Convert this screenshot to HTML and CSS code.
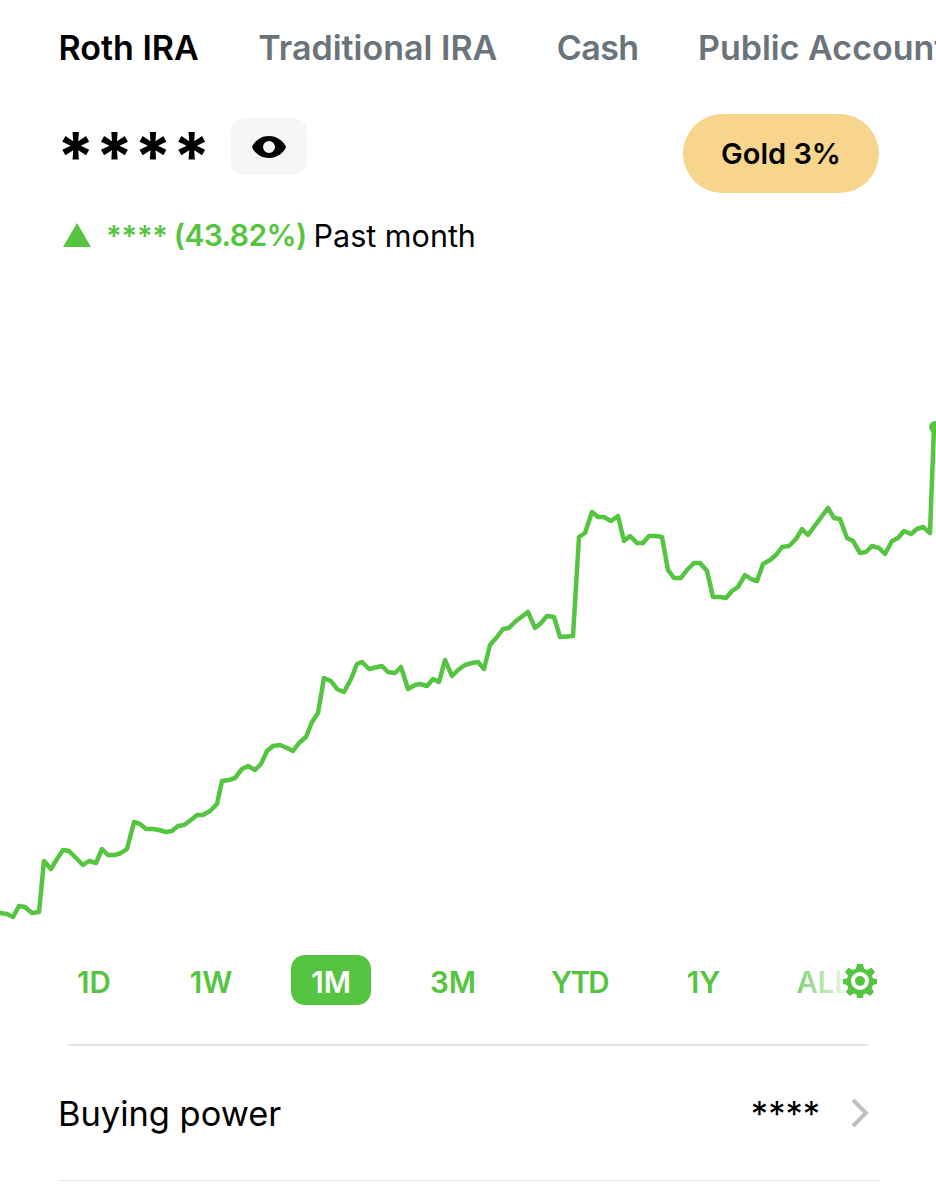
FILE: index.html
```html
<!DOCTYPE html>
<html lang="en">
<head>
<meta charset="utf-8">
<title>Account</title>
<link rel="stylesheet" href="styles.css">
</head>
<body>
<main class="page">
  <nav class="tabs">
    <span class="tab active">Roth IRA</span>
    <span class="tab">Traditional IRA</span>
    <span class="tab cash">Cash</span>
    <span class="tab">Public Account</span>
  </nav>
  <section class="summary">
    <div class="balance-row">
      <span class="balance">****</span>
      <span class="eye-btn">
        <svg class="eye" viewBox="0 0 34 22"><path fill-rule="evenodd" d="M17 0C26 0 32 6 34 11C32 16 26 22 17 22C8 22 2 16 0 11C2 6 8 0 17 0ZM17 5A6 6 0 1 0 17 17A6 6 0 1 0 17 5Z"/></svg>
      </span>
    </div>
    <span class="gold">Gold 3%</span>
  </section>
  <div class="change">
    <svg class="up" viewBox="0 0 28 24"><path d="M14 0L28 24H0Z"/></svg>
    <span class="stars">****</span>
    <span class="pct">(43.82%)</span>
    <span class="period">Past month</span>
  </div>
  <svg class="chart" viewBox="0 270 936 680">
    <polyline points="0,913 7,914 13,917 19,906 25,907 32,913 39,912 44,861 51,869 57,859 63,850 69,851 77,859 83,865 89,861 96,863 102,849 108,855 115,855 121,853 127,849 134,822 140,824 146,829 153,829 159,830 166,832 172,831 178,826 184,825 191,820 197,815 203,815 210,811 217,804 222,781 229,780 235,778 242,769 248,766 255,770 261,764 267,751 273,746 280,745 287,748 293,751 299,743 306,737 312,722 318,713 324,678 331,681 337,689 344,692 351,679 357,664 362,662 369,669 382,666 388,672 395,673 401,667 408,689 415,685 420,684 427,686 433,679 439,682 445,660 452,676 458,670 465,665 472,663 478,662 484,669 490,645 497,637 503,629 509,628 516,621 528,612 535,628 541,623 547,616 554,617 560,637 573,636 579,537 585,533 592,512 598,517 604,517 611,521 618,516 624,541 630,536 637,543 643,543 649,536 656,536 662,537 668,570 674,578 681,578 687,570 694,563 700,563 707,571 713,597 720,597 726,598 732,591 738,587 745,575 751,579 757,581 763,564 770,560 776,555 782,547 789,546 796,539 802,529 808,535 828,508 834,518 840,519 847,538 853,541 860,553 866,552 872,546 879,548 885,554 892,541 898,538 904,531 911,534 917,529 923,527 930,533 934,427"/>
    <circle cx="935" cy="427" r="6"/>
  </svg>
  <div class="ranges">
    <span class="range">1D</span>
    <span class="range">1W</span>
    <span class="range on">1M</span>
    <span class="range">3M</span>
    <span class="range ytd">YTD</span>
    <span class="range">1Y</span>
    <span class="range all">ALL</span>
    <svg class="gear" viewBox="0 0 34 34"><path fill-rule="evenodd" d="M14 0H20L21 4.5L24.5 6L28.5 3.5L32 8L29 11.5L30 14.5L34 15V20L30 21L28.8 24L31 28L27 32L23.5 29.5L20.5 30.5L20 34H14L13.5 30.5L10.5 29.5L7 32L3 28L5.2 24L4 21L0 20V15L4 14.5L5 11.5L2 8L5.500 3.500L9.500 6L13 4.500ZM17 8A9 9 0 1 0 17 26A9 9 0 1 0 17 8ZM17 12A5 5 0 1 1 17 22A5 5 0 1 1 17 12Z"/></svg>
  </div>
  <hr class="rule">
  <div class="row">
    <span class="row-label">Buying power</span>
    <span class="row-value">****</span>
    <svg class="chev" viewBox="0 0 20 30"><path d="M3 2L16 15L3 28"/></svg>
  </div>
</main>
</body>
</html>
```
FILE: styles.css
```css
* { box-sizing: border-box; }
html, body { margin: 0; padding: 0; background: #fff; }
body { font-family: Inter, "Liberation Sans", sans-serif; color: #000; }
.page { width: 936px; height: 1200px; overflow: hidden; }

.tabs { display: flex; gap: 59.500px; padding: 28px 0 0 58.500px; white-space: nowrap; height: 114px; }
.tab { font-size: 34px; line-height: 40px; font-weight: 600; color: #6b737b; }
.tab.active { color: #000; }
.tab.cash { letter-spacing: -0.6px; }

.summary { display: flex; justify-content: space-between; align-items: flex-start; padding: 0 57px 0 59px; height: 90px; }
.balance-row { display: flex; align-items: flex-start; gap: 25px; padding-top: 4px; }
.balance { font-size: 67px; line-height: 77px; font-weight: 700; width: 149px; margin-left: -2px; letter-spacing: 1.200px; white-space: nowrap; }
.eye-btn { width: 76px; height: 57px; border-radius: 14px; background: #f5f6f8; display: flex; align-items: center; justify-content: center; }
.eye { width: 34px; height: 22px; fill: #000; }
.gold { width: 196px; height: 79px; border-radius: 40px; background: #f7d58d; font-size: 29px; font-weight: 600; display: flex; align-items: center; justify-content: center; }

.change { display: flex; align-items: center; height: 66px; padding: 0 0 4px 63px; font-size: 29px; white-space: nowrap; }
.up { width: 28px; height: 24px; fill: #55c440; margin-right: 15px; }
.stars, .pct { color: #55c440; font-weight: 600; }
.stars { letter-spacing: -0.2px; }
.pct { margin: 0 7px 0 6px; font-size: 30px; letter-spacing: -0.600px; }
.period { font-size: 30.500px; }

.chart { display: block; width: 936px; height: 680px; }
.chart polyline { fill: none; stroke: #55c440; stroke-width: 4.500; stroke-linejoin: round; stroke-linecap: round; }
.chart circle { fill: #55c440; }

.ranges { position: relative; display: flex; gap: 39px; padding: 5px 0 0 57px; height: 75px; }
.range { height: 50px; padding: 0 20px; border-radius: 14px; font-size: 29.500px; font-weight: 600; line-height: 54px; color: #55c440; white-space: nowrap; }
.range.on { background: #55c440; color: #fff; }
.range.ytd { margin-left: -4px; letter-spacing: -1.800px; }
.range.all { margin-left: -3px; background: linear-gradient(90deg, #55c440 0, rgba(85,196,64,.3) 60%, rgba(85,196,64,0) 80%) no-repeat; background-clip: text; -webkit-background-clip: text; color: transparent; }
.gear { position: absolute; left: 843px; top: 14px; width: 34px; height: 34px; fill: #55c440; }

.rule { margin: 19px 68px 0; border: 0; height: 2px; background: #e4e6ea; }
.row { display: flex; align-items: center; margin: 0 56px 0 58px; padding-right: 10px; height: 135px; border-bottom: 1px solid #e8e9ec; }
.row-label { font-size: 34.400px; flex: 1; }
.row-value { font-size: 34.500px; margin-right: 30px; }
.chev { width: 20px; height: 30px; fill: none; stroke: #bcc1c7; stroke-width: 4; }
```
